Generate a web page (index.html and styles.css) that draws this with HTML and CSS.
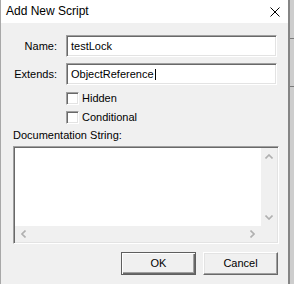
FILE: index.html
```html
<!DOCTYPE html>
<html>
<head>
<meta charset="utf-8">
<link rel="stylesheet" href="styles.css">
</head>
<body>
<div class="screen">
  <div class="window">
    <div class="titlebar">
      <span class="title">Add New Script</span>
      <svg class="close" width="10" height="10" viewBox="0 0 10 10"><path d="M0.5 0.5L9.5 9.5M9.5 0.5L0.5 9.5" stroke="#000" stroke-width="1" fill="none"/></svg>
    </div>
    <div class="client">
      <div class="fields">
        <label class="lbl">Name:</label>
        <div class="edit"><span>testLock</span></div>
        <label class="lbl">Extends:</label>
        <div class="edit"><span>ObjectReference</span><span class="caret"></span></div>
      </div>
      <div class="checks">
        <div class="check"><span class="box"></span><span>Hidden</span></div>
        <div class="check"><span class="box"></span><span>Conditional</span></div>
      </div>
      <div class="doclbl">Documentation String:</div>
      <div class="memo">
        <div class="memo-area"></div>
        <div class="vscroll">
          <div class="arrow"><svg width="8" height="5" viewBox="0 0 8 5"><polyline points="0.5,4.5 4,1 7.5,4.5" stroke="#b0b0b0" stroke-width="1.6" fill="none"/></svg></div>
          <div class="arrow"><svg width="8" height="5" viewBox="0 0 8 5"><polyline points="0.5,0.5 4,4 7.5,0.5" stroke="#b0b0b0" stroke-width="1.6" fill="none"/></svg></div>
        </div>
        <div class="hscroll">
          <div class="arrow"><svg width="5" height="8" viewBox="0 0 5 8"><polyline points="4.5,0.5 1,4 4.5,7.5" stroke="#b0b0b0" stroke-width="1.6" fill="none"/></svg></div>
          <div class="arrow"><svg width="5" height="8" viewBox="0 0 5 8"><polyline points="0.5,0.5 4,4 0.5,7.5" stroke="#b0b0b0" stroke-width="1.6" fill="none"/></svg></div>
        </div>
        <div class="corner"></div>
      </div>
      <div class="buttons">
        <div class="btn default">OK</div>
        <div class="btn">Cancel</div>
      </div>
    </div>
  </div>
  <div class="strip">
    <div class="strip-line l1"></div>
    <div class="strip-line l2"></div>
  </div>
</div>
</body>
</html>
```

FILE: styles.css
```css
html, body {
  margin: 0;
  padding: 0;
}
body {
  width: 294px;
  height: 284px;
  overflow: hidden;
  font-family: "Liberation Sans", Arial, sans-serif;
  font-size: 11px;
  line-height: 13px;
  color: #000;
}
.screen {
  display: flex;
  width: 294px;
  height: 284px;
}
.window {
  width: 290px;
  height: 284px;
  box-sizing: border-box;
  border-left: 1px solid #a8a8a8;
  border-right: 2px solid #858585;
  background: #f0f0f0;
  flex: none;
}
.titlebar {
  height: 23px;
  background: #fff;
  display: flex;
  align-items: center;
  justify-content: space-between;
  padding: 0 8px 0 5px;
}
.title {
  font-size: 12px;
  line-height: 23px;
}
.close {
  display: block;
}
.client {
  padding: 12px 0 0 12px;
}
.fields {
  display: grid;
  grid-template-columns: 44px 211px;
  grid-auto-rows: 22px;
  column-gap: 9px;
  row-gap: 6px;
  align-items: center;
}
.lbl {
  text-align: right;
  white-space: nowrap;
}
.edit,
.box,
.memo {
  box-sizing: border-box;
  background: #fff;
  border: 1px solid;
  border-color: #a0a0a0 #fff #fff #a0a0a0;
  box-shadow: inset 1px 1px #696969, inset -1px -1px #e3e3e3;
}
.edit {
  height: 22px;
  display: flex;
  align-items: center;
  padding-left: 4px;
  white-space: nowrap;
}
.caret {
  width: 1px;
  height: 11px;
  background: #000;
  margin-left: 1px;
}
.checks {
  margin: 7px 0 0 53px;
  display: flex;
  flex-direction: column;
  gap: 6px;
}
.check {
  display: flex;
  align-items: center;
  height: 13px;
  gap: 3px;
}
.box {
  width: 13px;
  height: 13px;
}
.doclbl {
  margin-top: 5px;
  height: 13px;
}
.memo {
  margin-top: 4px;
  width: 266px;
  height: 98px;
  padding: 1px;
  display: grid;
  grid-template-columns: 1fr 16px;
  grid-template-rows: 1fr 16px;
}
.memo-area {
  background: #fff;
}
.vscroll,
.hscroll,
.corner {
  background: #f0f0f0;
}
.vscroll {
  display: flex;
  flex-direction: column;
  justify-content: space-between;
}
.vscroll .arrow {
  height: 17px;
  display: flex;
  align-items: center;
  justify-content: center;
}
.hscroll {
  display: flex;
  justify-content: space-between;
}
.hscroll .arrow {
  width: 17px;
  display: flex;
  align-items: center;
  justify-content: center;
}
.arrow svg {
  display: block;
}
.buttons {
  margin-top: 8px;
  width: 265px;
  display: flex;
  justify-content: flex-end;
  gap: 7px;
}
.btn {
  box-sizing: border-box;
  width: 75px;
  height: 23px;
  display: flex;
  align-items: center;
  justify-content: center;
  border: 1px solid;
  border-color: #fff #696969 #696969 #fff;
  box-shadow: inset -1px -1px #a0a0a0, inset 1px 1px #e3e3e3;
  background: #f0f0f0;
}
.btn.default {
  border-color: #5f5f5f;
  box-shadow: inset 1px 1px #fff, inset -1px -1px #696969, inset -2px -2px #a0a0a0;
}
.strip {
  flex: 1;
  background: #cdcdcd;
  position: relative;
}
.strip-line {
  position: absolute;
  left: 0;
  right: 0;
  height: 1px;
  background: #7a7a7a;
}
.l1 { top: 38px; }
.l2 { top: 86px; }
```
